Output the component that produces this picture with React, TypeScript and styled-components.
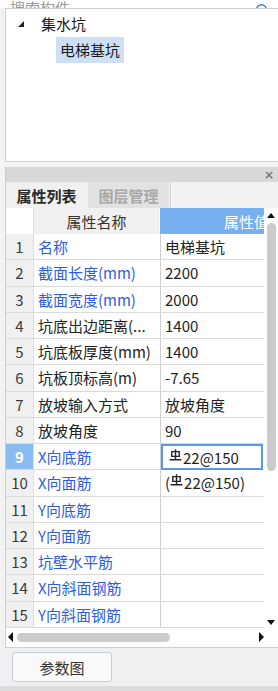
import React from 'react'
import styled, { createGlobalStyle } from 'styled-components'
import { Search } from 'lucide-react'

const GlobalStyle = createGlobalStyle`
  html, body {
    margin: 0;
    padding: 0;
    background: #f3f3f3;
  }
  body {
    font-family: "Noto Sans CJK SC", "Microsoft YaHei", sans-serif;
    color: #222;
  }
`

const rows: { name: string; value?: string; blue?: boolean; rebar?: 'plain' | 'paren' }[] = [
  { name: '名称', value: '电梯基坑', blue: true },
  { name: '截面长度(mm)', value: '2200', blue: true },
  { name: '截面宽度(mm)', value: '2000', blue: true },
  { name: '坑底出边距离(...', value: '1400' },
  { name: '坑底板厚度(mm)', value: '1400' },
  { name: '坑板顶标高(m)', value: '-7.65' },
  { name: '放坡输入方式', value: '放坡角度' },
  { name: '放坡角度', value: '90' },
  { name: 'X向底筋', blue: true, rebar: 'plain' },
  { name: 'X向面筋', blue: true, rebar: 'paren' },
  { name: 'Y向底筋', blue: true },
  { name: 'Y向面筋', blue: true },
  { name: '坑壁水平筋', blue: true },
  { name: 'X向斜面钢筋', blue: true },
  { name: 'Y向斜面钢筋', blue: true },
]

const SELECTED = 9

const RebarMark = () => (
  <RebarSvg width="13" height="14" viewBox="0 0 13 14">
    <path d="M2.8 2.6h7.4v4.8h-7.4z" fill="none" stroke="#222" strokeWidth="1.4" />
    <path d="M6.5 0.3v10.6M0.6 10.8h11.8" stroke="#222" strokeWidth="1.4" fill="none" />
  </RebarSvg>
)

const Arrow = ({ dir }: { dir: 'up' | 'down' | 'left' | 'right' }) => {
  const d = {
    up: 'M1 6 L5 1 L9 6 Z',
    down: 'M1 1 L9 1 L5 6 Z',
    left: 'M6 0 L6 10 L1 5 Z',
    right: 'M1 0 L1 10 L6 5 Z',
  }[dir]
  const vertical = dir === 'up' || dir === 'down'
  return (
    <svg width={vertical ? 10 : 7} height={vertical ? 7 : 10} viewBox={vertical ? '0 0 10 7' : '0 0 7 10'}>
      <path d={d} fill="#111" />
    </svg>
  )
}

export default function App() {
  return (
    <Page>
      <GlobalStyle />
      <SearchStrip>
        <SearchText>搜索构件...</SearchText>
        <Search size={14} color="#2f86d6" strokeWidth={2.4} />
      </SearchStrip>

      <TreePanel>
        <TreeRow>
          <Caret />
          <TreeLabel>集水坑</TreeLabel>
        </TreeRow>
        <TreeRow $indent>
          <TreeLabel $selected>电梯基坑</TreeLabel>
        </TreeRow>
      </TreePanel>

      <PropPanel>
        <TitleBar>
          <CloseMark>×</CloseMark>
        </TitleBar>
        <Tabs>
          <Tab $active>属性列表</Tab>
          <Tab>图层管理</Tab>
          <TabFiller />
        </Tabs>

        <GridArea>
          <Viewport>
            <Row $header>
              <NumCell $corner />
              <NameHead>属性名称</NameHead>
              <ValueHead>属性值</ValueHead>
            </Row>
            {rows.map((r, i) => {
              const n = i + 1
              const selected = n === SELECTED
              return (
                <Row key={n}>
                  <NumCell $selected={selected}>{n}</NumCell>
                  <NameCell $blue={r.blue}>{r.name}</NameCell>
                  <ValueCell $selected={selected}>
                    {r.rebar === 'paren' && '('}
                    {r.rebar && <RebarMark />}
                    {r.rebar ? '22@150' : r.value}
                    {r.rebar === 'paren' && ')'}
                  </ValueCell>
                </Row>
              )
            })}
          </Viewport>
          <VScroll>
            <Arrow dir="up" />
            <VThumb />
            <VSpacer />
            <Arrow dir="down" />
          </VScroll>
        </GridArea>

        <HScroll>
          <Arrow dir="left" />
          <HThumb />
          <HSpacer />
          <Arrow dir="right" />
        </HScroll>
      </PropPanel>

      <Footer>
        <ParamButton>参数图</ParamButton>
      </Footer>
      <BottomStrip />
    </Page>
  )
}

const Page = styled.div`
  width: 278px;
  height: 691px;
  overflow: hidden;
  display: flex;
  flex-direction: column;
  background: #f3f3f3;
`

const SearchStrip = styled.div`
  height: 8px;
  flex: none;
  overflow: hidden;
  display: flex;
  align-items: flex-end;
  justify-content: space-between;
  padding: 0 9px 0 10px;
  background: #fff;
  svg {
    margin-bottom: -9px;
  }
`

const SearchText = styled.div`
  font-size: 15px;
  line-height: 18px;
  color: #9a9a9a;
  margin-bottom: -9px;
`

const TreePanel = styled.div`
  height: 154px;
  flex: none;
  margin: 0 -10px 0 5px;
  border: 1px solid #cfcfcf;
  background: #fff;
  box-sizing: border-box;
  padding-top: 2px;
  display: flex;
  flex-direction: column;
`

const TreeRow = styled.div<{ $indent?: boolean }>`
  display: flex;
  align-items: center;
  height: 26px;
  padding-left: ${(p) => (p.$indent ? '50px' : '12px')};
`

const Caret = styled.span`
  width: 0;
  height: 0;
  border-left: 6px solid transparent;
  border-bottom: 6px solid #222;
  margin-right: 13px;
`

const TreeLabel = styled.span<{ $selected?: boolean }>`
  font-size: 15px;
  line-height: 26px;
  padding: 0 4px;
  color: #1a1a1a;
  background: ${(p) => (p.$selected ? '#cde0f5' : 'transparent')};
`

const PropPanel = styled.div`
  margin: 5px -10px 0 5px;
  border-left: 1px solid #cfcfcf;
  border-bottom: 1px solid #cfcfcf;
  background: #fff;
  display: flex;
  flex-direction: column;
`

const TitleBar = styled.div`
  height: 15px;
  background: #d8d8d8;
  display: flex;
  align-items: center;
  justify-content: flex-end;
  padding-right: 14px;
`

const CloseMark = styled.span`
  font-family: "DejaVu Sans", sans-serif;
  font-size: 12px;
  line-height: 12px;
  color: #777;
  font-weight: bold;
`

const Tabs = styled.div`
  height: 26px;
  display: flex;
  background: #f0f0f0;
`

const Tab = styled.div<{ $active?: boolean }>`
  width: 81px;
  margin-right: 1px;
  display: flex;
  align-items: center;
  justify-content: center;
  font-size: 15px;
  font-weight: bold;
  color: ${(p) => (p.$active ? '#2a2a2a' : '#a8a8a8')};
  background: ${(p) => (p.$active ? '#f0f0f0' : '#e2e2e2')};
`

const TabFiller = styled.div`
  flex: 1;
  border-left: 1px solid #d4d4d4;
  background: #f2f2f2;
`

const GridArea = styled.div`
  display: flex;
  width: 272px;
`

const Viewport = styled.div`
  flex: 1;
  overflow: hidden;
  display: flex;
  flex-direction: column;
`

const Row = styled.div<{ $header?: boolean }>`
  display: flex;
  height: ${(p) => (p.$header ? '26px' : '26.25px')};
  box-sizing: border-box;
  border-bottom: ${(p) => (p.$header ? 'none' : '1px solid #dadada')};
  font-size: 15px;
  white-space: nowrap;
`

const NumCell = styled.div<{ $corner?: boolean; $selected?: boolean }>`
  width: 27px;
  flex: none;
  display: flex;
  align-items: center;
  justify-content: center;
  border-right: 1px solid #dedede;
  background: ${(p) => (p.$corner ? '#fff' : p.$selected ? '#88bbef' : '#f0f0f0')};
  color: ${(p) => (p.$selected ? '#fff' : '#3a3a3a')};
  font-weight: ${(p) => (p.$selected ? 'bold' : 'normal')};
`

const NameHead = styled.div`
  width: 125px;
  flex: none;
  display: flex;
  align-items: center;
  justify-content: center;
  background: #f0f0f0;
  color: #333;
  border-right: 1px solid #fff;
`

const ValueHead = styled.div`
  flex: 1;
  display: flex;
  align-items: center;
  padding-left: 64px;
  background: #78b0ef;
  color: #fff;
  overflow: hidden;
`

const NameCell = styled.div<{ $blue?: boolean }>`
  width: 122px;
  flex: none;
  display: flex;
  align-items: center;
  padding-left: 4px;
  border-right: 1px solid #cfcfcf;
  color: ${(p) => (p.$blue ? '#2d5de6' : '#222')};
  overflow: hidden;
`

const ValueCell = styled.div<{ $selected?: boolean }>`
  flex: 1;
  display: flex;
  align-items: center;
  box-sizing: border-box;
  padding-left: ${(p) => (p.$selected ? '6px' : '4px')};
  margin: ${(p) => (p.$selected ? '0 1px -1px 0' : '0')};
  border: ${(p) => (p.$selected ? '2px solid #5b9ae2' : 'none')};
  color: #222;
  overflow: hidden;
`

const RebarSvg = styled.svg`
  margin-right: 1px;
  margin-bottom: 3px;
`

const VScroll = styled.div`
  width: 14px;
  flex: none;
  display: flex;
  flex-direction: column;
  align-items: center;
  padding-top: 4px;
  padding-bottom: 2px;
  background: #fff;
`

const VThumb = styled.div`
  width: 9px;
  height: 248px;
  margin-top: 4px;
  border-radius: 5px;
  background: #cbcbcb;
`

const VSpacer = styled.div`
  flex: 1;
`

const HScroll = styled.div`
  height: 19px;
  width: 272px;
  display: flex;
  align-items: center;
  padding: 0 13px 0 1px;
  box-sizing: border-box;
  background: #fff;
`

const HThumb = styled.div`
  width: 153px;
  height: 9px;
  margin-left: 3px;
  border-radius: 5px;
  background: #cbcbcb;
`

const HSpacer = styled.div`
  flex: 1;
`

const Footer = styled.div`
  height: 38px;
  flex: none;
  display: flex;
  align-items: center;
  padding-left: 12px;
  background: #f0f0f0;
`

const ParamButton = styled.button`
  width: 100px;
  height: 30px;
  margin-top: 1px;
  border: 1px solid #c6ccd8;
  border-radius: 3px;
  background: #f9f9f9;
  font-family: "Noto Sans CJK SC", sans-serif;
  font-size: 15px;
  color: #333;
  padding: 0;
`

const BottomStrip = styled.div`
  flex: 1;
  background: #dcdcdc;
`
